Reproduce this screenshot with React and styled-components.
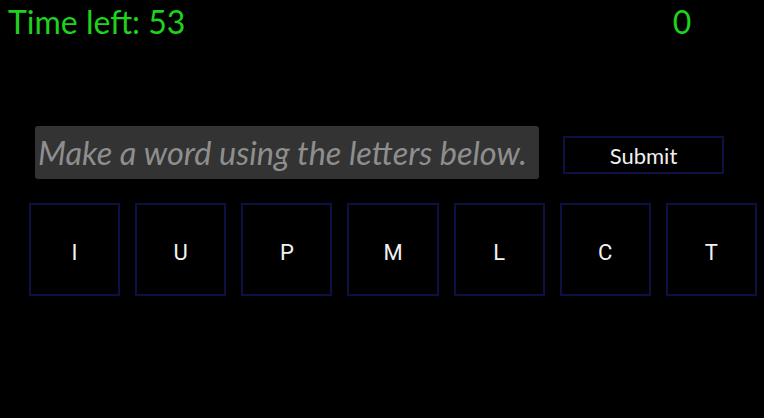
import React, { useState } from "react";
import styled, { createGlobalStyle } from "styled-components";

const GlobalStyle = createGlobalStyle`
  html, body {
    margin: 0;
    background: #000;
  }
  body {
    font-family: "Lato", "Open Sans", sans-serif;
  }
`;

const Page = styled.div`
  width: 764px;
  height: 418px;
  background: #000;
  overflow: hidden;
`;

const Header = styled.div`
  display: flex;
  justify-content: space-between;
  align-items: flex-start;
  padding: 1px 72px 0 8px;
  color: #1ed21e;
  font-size: 32px;
  line-height: 42px;
`;

const Score = styled.span`
  width: 20px;
  text-align: center;
`;

const Game = styled.div`
  display: flex;
  flex-direction: column;
  gap: 24px;
  padding: 83px 7px 0 29px;
`;

const EntryRow = styled.div`
  display: flex;
  align-items: flex-start;
  gap: 24px;
  padding-left: 6px;
`;

const WordInput = styled.input`
  width: 504px;
  height: 53px;
  box-sizing: border-box;
  border: none;
  border-radius: 3px;
  background: #333333;
  color: #ddd;
  font-family: "Lato", sans-serif;
  font-size: 32.5px;
  padding: 0 3px;
  outline: none;

  &::placeholder {
    color: #8e8e8e;
    font-style: italic;
  }
`;

const SubmitButton = styled.button`
  width: 161px;
  height: 38px;
  margin-top: 10px;
  background: #000;
  border: 2px solid #0c1042;
  color: #f0f0f0;
  font-family: "Lato", sans-serif;
  font-size: 22px;
  cursor: pointer;
`;

const Tiles = styled.div`
  display: flex;
  gap: 15px;
`;

const Tile = styled.button`
  flex: 1;
  height: 93px;
  padding-top: 6px;
  background: #000;
  border: 2px solid #0c1042;
  color: #f2f2f2;
  font-family: "Roboto", "Liberation Sans", sans-serif;
  font-size: 22px;
  cursor: pointer;
`;

const letters = ["I", "U", "P", "M", "L", "C", "T"];

export default function App() {
  const [word, setWord] = useState("");

  return (
    <>
      <GlobalStyle />
      <Page>
        <Header>
          <span>Time left: 53</span>
          <Score>0</Score>
        </Header>
        <Game>
          <EntryRow>
            <WordInput
              value={word}
              onChange={(e) => setWord(e.target.value)}
              placeholder="Make a word using the letters below."
            />
            <SubmitButton>Submit</SubmitButton>
          </EntryRow>
          <Tiles>
            {letters.map((l) => (
              <Tile key={l} onClick={() => setWord(word + l)}>
                {l}
              </Tile>
            ))}
          </Tiles>
        </Game>
      </Page>
    </>
  );
}
